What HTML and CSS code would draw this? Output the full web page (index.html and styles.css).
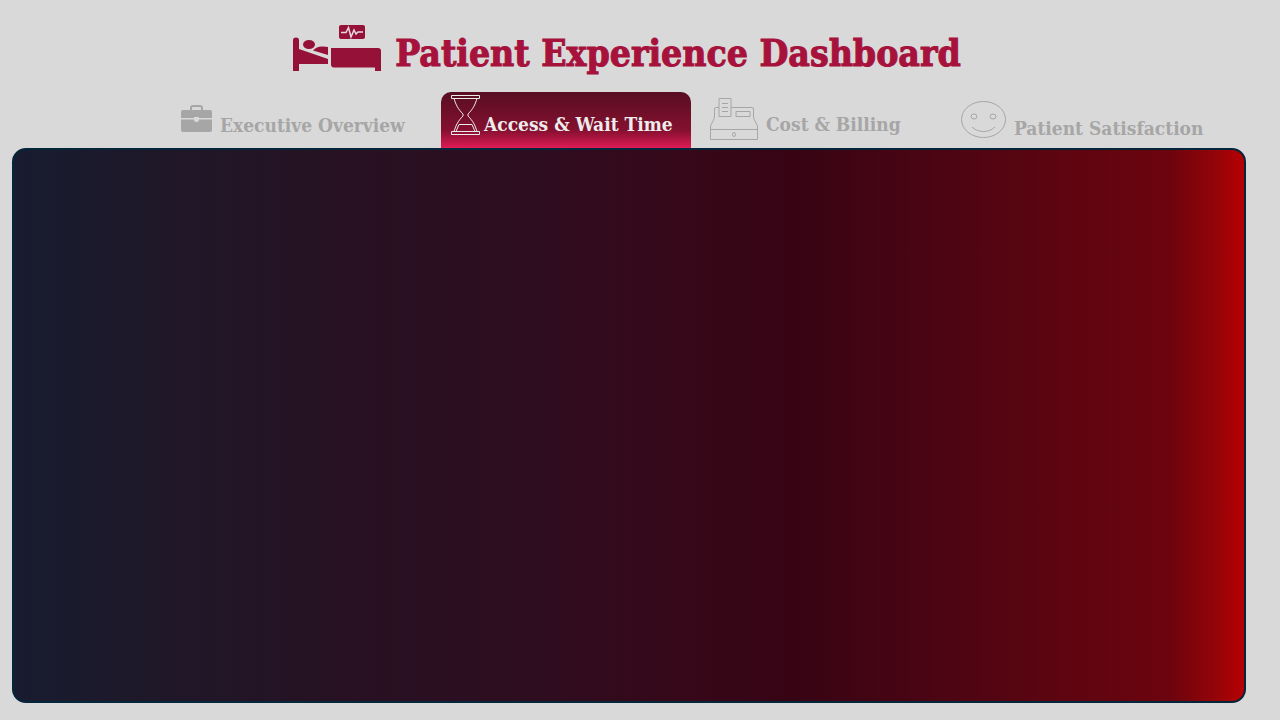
FILE: index.html
```html
<!DOCTYPE html>
<html lang="en">
<head>
<meta charset="utf-8">
<meta name="viewport" content="width=device-width, initial-scale=1">
<title>Patient Experience Dashboard</title>
<link rel="stylesheet" href="styles.css">
</head>
<body>
<header class="header">
  <svg class="logo" width="88" height="46" viewBox="0 0 88 46" aria-hidden="true">
    <path d="M0 15Q0 12.500 3 12.500Q6 12.500 6 15V24L35 34V39H6V46H0Z"/>
    <ellipse cx="16" cy="19.500" rx="6" ry="4.500"/>
    <path d="M20 25.500Q24 21 30 21.500L35 22V30Z"/>
    <path d="M38 23H85Q88 23 88 26V46H82V42.500H41Q38 42.500 38 39.500Z"/>
    <rect x="46" y="0" width="26" height="14" rx="2"/>
    <path class="pulse" d="M48 7.500H53L55.500 2.500L58 12L61 5L63 9L65 7H70"/>
  </svg>
  <h1 class="title">Patient Experience Dashboard</h1>
</header>
<nav class="tabs" role="tablist" aria-label="Dashboard sections">
  <button class="tab tab-overview" type="button" role="tab" aria-selected="false">
    <svg width="31" height="27" viewBox="0 0 31 27" aria-hidden="true">
      <path class="solid" d="M9 5V3Q9 0 12 0H19Q22 0 22 3V5H29Q31 5 31 7V13H18V12H13V13H0V7Q0 5 2 5ZM11 5H20V3Q20 2 19 2H12Q11 2 11 3ZM0 14.500H13Q13 17 15.500 17Q18 17 18 14.500H31V25Q31 27 29 27H2Q0 27 0 25Z" fill-rule="evenodd"/>
    </svg>
    <span>Executive Overview</span>
  </button>
  <button class="tab tab-access" type="button" role="tab" aria-selected="true" aria-controls="panel">
    <svg width="29" height="40" viewBox="0 0 29 40" aria-hidden="true">
      <path d="M.5 .5H28.500V3.500H.5ZM.5 36.500H28.500V39.500H.5ZM3 3.500C5 10 7 14 12 19V21C7 26 5 30 3 36.500M26 3.500C24 10 22 14 17 19V21C22 26 24 30 26 36.500M5 36.500L8 29.500H21L24 36.500"/>
    </svg>
    <span>Access &amp; Wait Time</span>
  </button>
  <button class="tab tab-cost" type="button" role="tab" aria-selected="false">
    <svg width="48" height="42" viewBox="0 0 48 42" aria-hidden="true">
      <path d="M9 9.500H6Q4.500 9.500 4.500 11V18Q4.500 21 3 23L.5 28V41.500H47.500V28L45 23Q43.500 21 43.500 18V11Q43.500 9.500 42 9.500H21M.5 31.500H47.500M9 .5H21V18.500H9ZM12 5.500H18M12 9.500H18M12 13.500H18M26 13.500H40V18.500H26Z"/>
      <ellipse cx="24" cy="36.500" rx="1.500" ry="2"/>
    </svg>
    <span>Cost &amp; Billing</span>
  </button>
  <button class="tab tab-satisfaction" type="button" role="tab" aria-selected="false">
    <svg width="45" height="37" viewBox="0 0 45 37" aria-hidden="true">
      <ellipse cx="22.500" cy="18.500" rx="22" ry="18"/>
      <ellipse cx="13" cy="15.500" rx="3" ry="2.500"/>
      <ellipse cx="32" cy="15.500" rx="3" ry="2.500"/>
      <path d="M11 26C17 32 28 32 34 26"/>
    </svg>
    <span>Patient Satisfaction</span>
  </button>
</nav>
<main class="panel" id="panel" role="tabpanel" aria-label="Access &amp; Wait Time"></main>
</body>
</html>
```
FILE: styles.css
```css
* { box-sizing: border-box; }

body {
  display: flex;
  flex-direction: column;
  min-height: 100vh;
  margin: 0;
  padding: 0 34px 17px 12px;
  background: #d9d9d9;
  font-family: "DejaVu Serif Condensed", "DejaVu Serif", serif;
}

.header {
  display: flex;
  align-items: flex-start;
  justify-content: center;
  gap: 14px;
  min-height: 92px;
  padding: 25px 4px 0 0;
}

.logo { flex: none; fill: #961137; }
.logo .pulse { fill: none; stroke: #e6dce0; stroke-width: 1.5; }

.title {
  margin: 0;
  padding-top: 8px;
  color: #a6123c;
  font-size: 37px;
  font-weight: 700;
  line-height: 40px;
  -webkit-text-stroke: 1px #a6123c;
}

.tabs {
  display: flex;
  justify-content: flex-end;
  gap: 10px;
  padding-right: 35px;
}

.tab {
  display: flex;
  align-items: flex-start;
  flex: 0 1 250px;
  gap: 8px;
  height: 56px;
  padding: 0;
  border: 0;
  border-radius: 10px 10px 0 0;
  background: none;
  color: #a6a6a6;
  font-family: inherit;
  font-size: 19px;
  font-weight: 700;
  line-height: 24px;
  white-space: nowrap;
  cursor: pointer;
}

.tab svg { flex: none; fill: none; stroke: currentColor; }
.tab .solid { fill: currentColor; stroke: none; }
.tab span { padding-top: 20px; }

.tab-overview { padding-top: 1px; }
.tab-overview svg { margin-top: 12px; }

.tab-access {
  gap: 4px;
  padding: 0 10px;
  background: linear-gradient(#580e22 0%, #84102f 68%, #d3194f 96%, #e51e59 100%);
  color: #ececec;
}
.tab-access svg { margin-top: 3px; }

.tab-cost { padding-left: 9px; }
.tab-cost svg { margin-top: 6px; }

.tab-satisfaction { padding-top: 4px; }
.tab-satisfaction svg { margin-top: 5px; }

.panel {
  flex: 1;
  border: 2px solid #05253a;
  border-radius: 14px;
  background: linear-gradient(90deg, #181c30 0%, #1e1829 11%, #261223 25%, #2e0d20 42%, #360819 54%, #370414 63%, #4d0513 76%, #600510 87%, #6c040e 94%, #970408 98%, #b80003 100%);
}
```
